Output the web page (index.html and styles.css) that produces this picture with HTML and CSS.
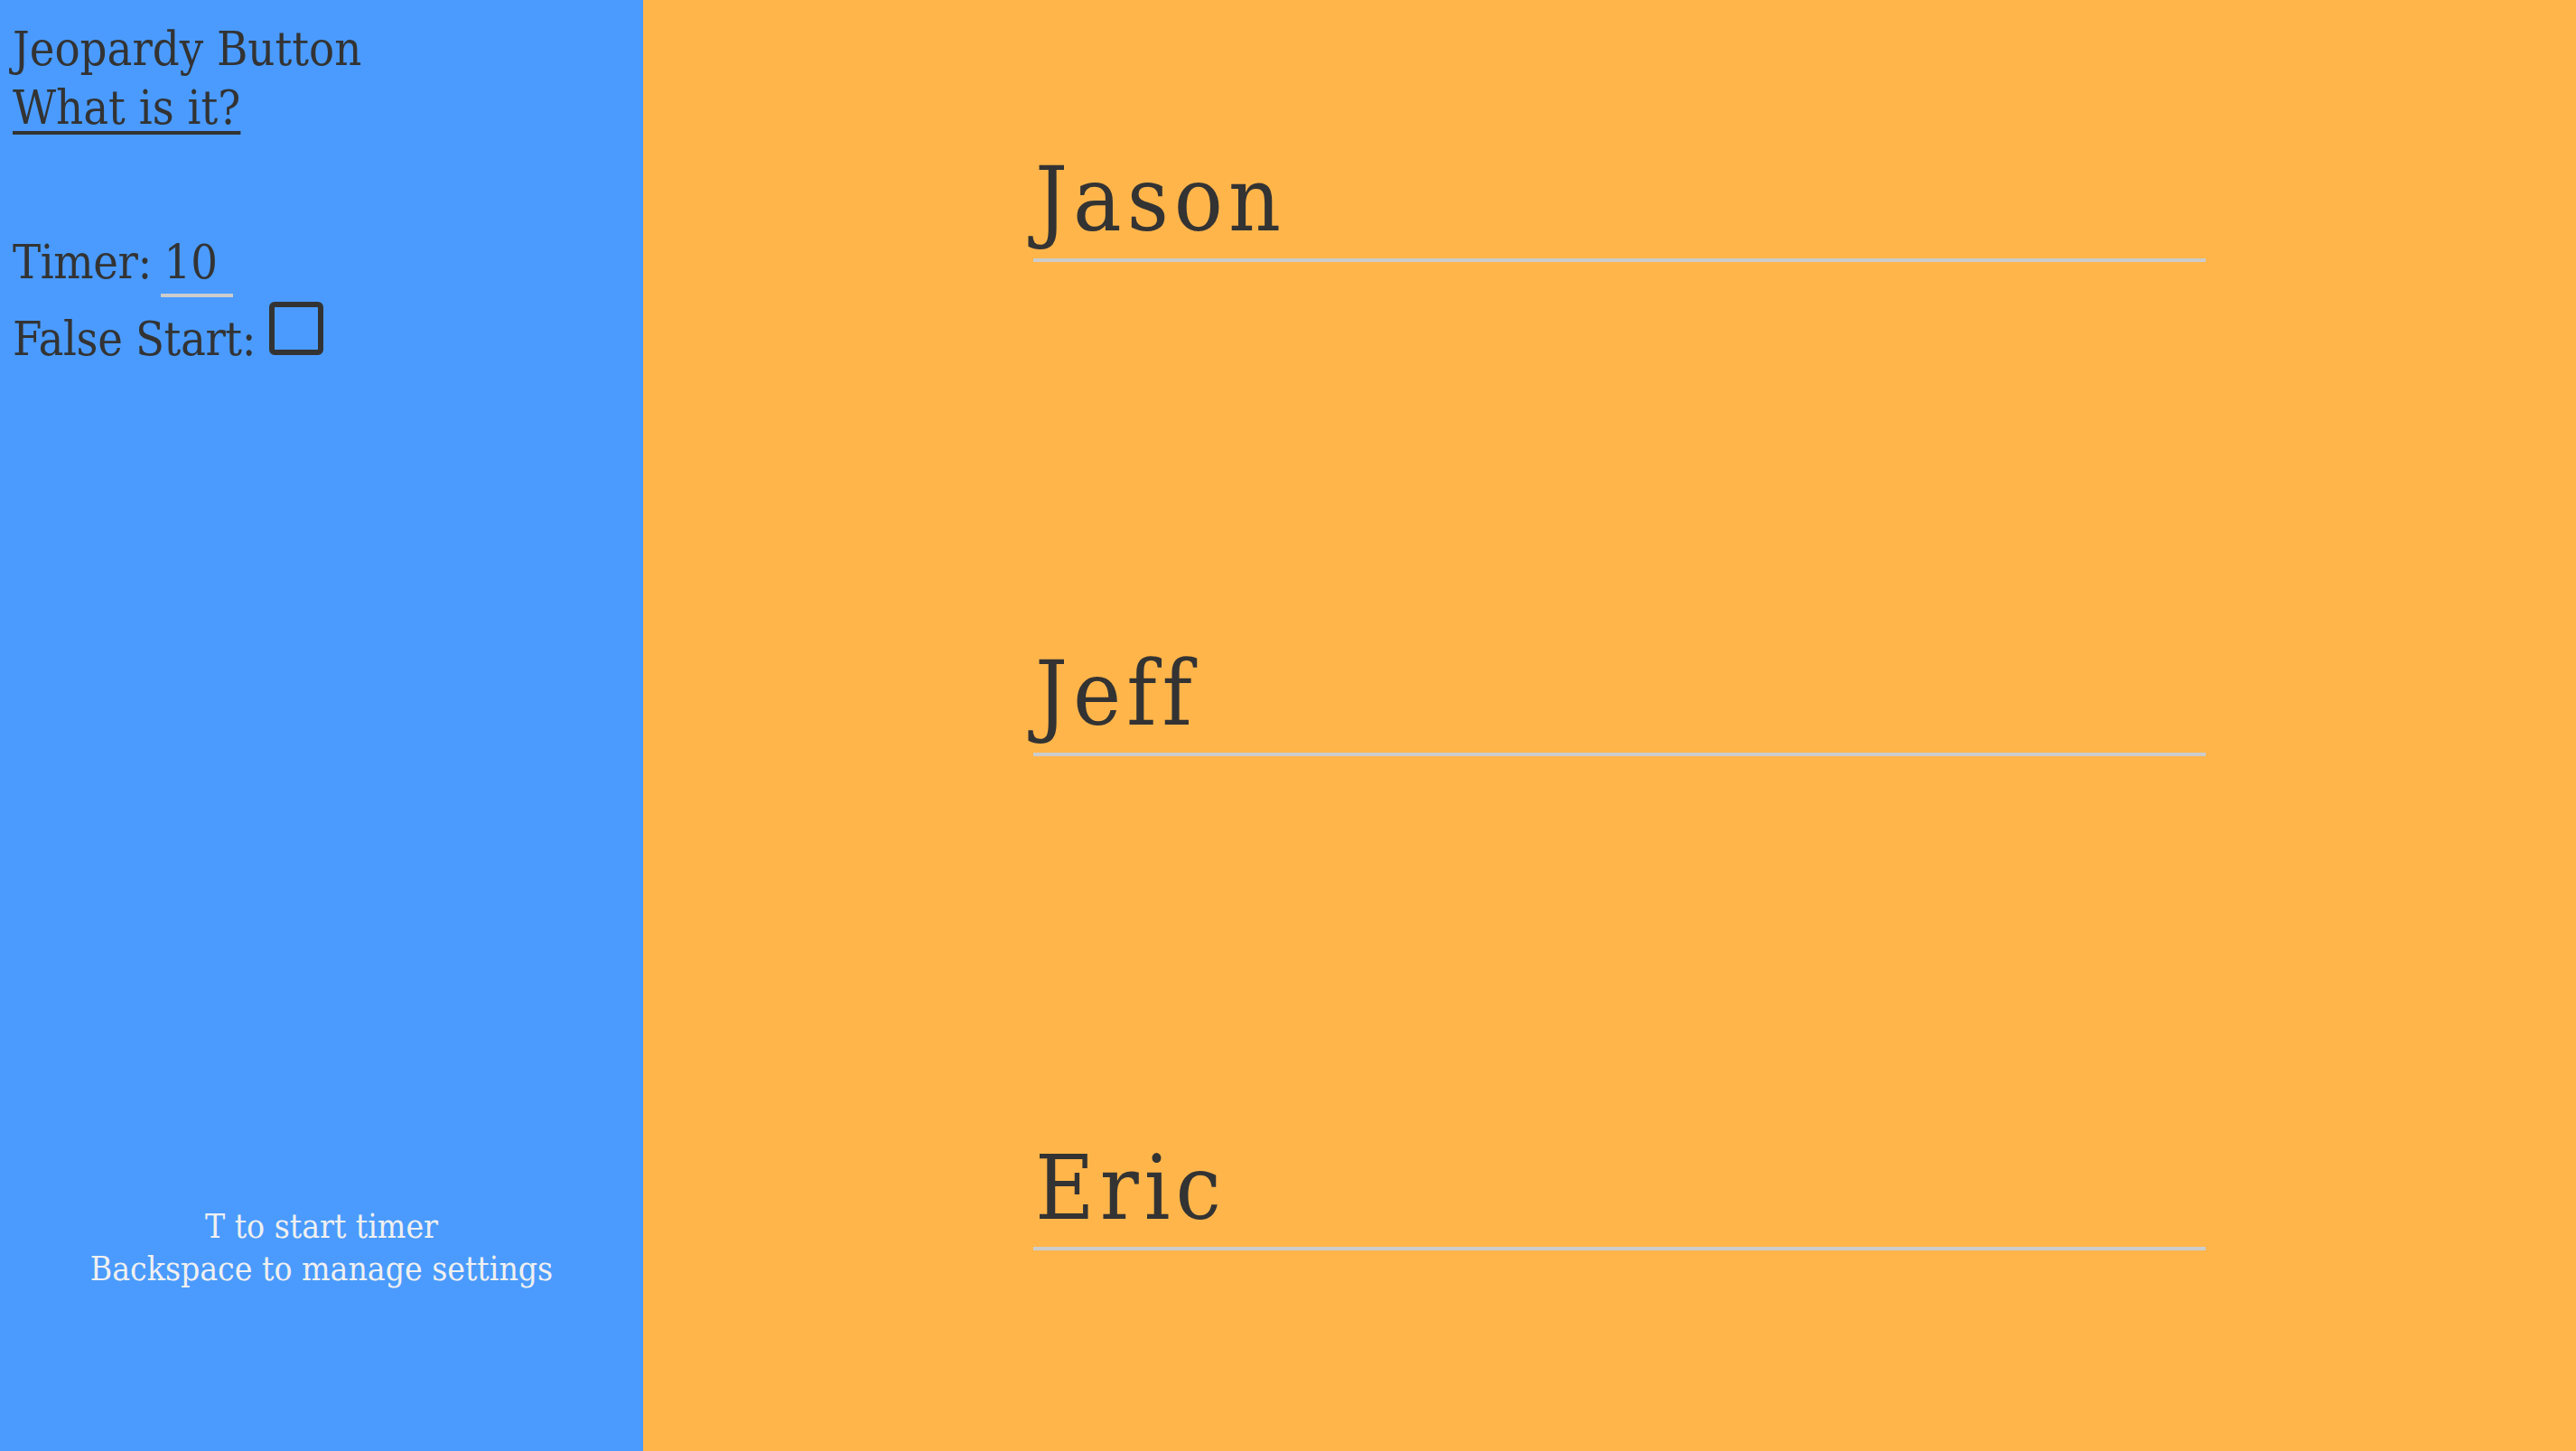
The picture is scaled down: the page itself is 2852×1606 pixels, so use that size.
FILE: index.html
```html
<!DOCTYPE html>
<html>
<head>
<meta charset="utf-8">
<link rel="stylesheet" href="styles.css">
</head>
<body>
<div class="app">
  <aside class="sidebar">
    <div class="title">Jeopardy Button</div>
    <a class="what" href="#">What is it?</a>
    <div class="settings">
      <div class="setting">Timer: <span class="timer">10</span></div>
      <div class="setting">False Start: <span class="checkbox"></span></div>
    </div>
    <div class="help">T to start timer<br>Backspace to manage settings</div>
  </aside>
  <main class="board">
    <div class="player">Jason</div>
    <div class="player">Jeff</div>
    <div class="player">Eric</div>
  </main>
</div>
</body>
</html>
```

FILE: styles.css
```css
html, body {
  margin: 0;
  padding: 0;
  height: 100%;
}
body {
  font-family: "DejaVu Serif Condensed", "DejaVu Serif", serif;
  font-stretch: condensed;
  color: #333333;
  overflow: hidden;
}
.app {
  display: flex;
  height: 1606px;
}
.sidebar {
  width: 712px;
  flex: none;
  background: #4a9bfd;
  display: flex;
  flex-direction: column;
  padding: 22px 14px 0 14px;
  box-sizing: border-box;
  font-size: 52px;
}
.title {
  line-height: 65px;
}
.what {
  line-height: 65px;
  color: #333333;
  text-decoration: underline;
  text-decoration-thickness: 4px;
  text-underline-offset: 8px;
  align-self: flex-start;
}
.settings {
  margin-top: 96px;
}
.setting {
  line-height: 85px;
  white-space: nowrap;
  letter-spacing: -0.4px;
}
.timer {
  display: inline-block;
  width: 77px;
  padding-left: 3px;
  line-height: 54px;
  padding-bottom: 8px;
  border-bottom: 4px solid #cccccc;
  margin-left: -4px;
  letter-spacing: 0;
}
.checkbox {
  display: inline-block;
  width: 60px;
  height: 59px;
  box-sizing: border-box;
  border: 6px solid #333333;
  border-radius: 6px;
}
.help {
  margin-top: auto;
  padding-bottom: 178px;
  text-align: center;
  color: #f0f0f0;
  font-size: 37px;
  line-height: 47px;
}
.board {
  flex: 1;
  background: #ffb54a;
  padding: 171px 0 0 432px;
  box-sizing: border-box;
  display: flex;
  flex-direction: column;
  gap: 428px;
}
.player {
  width: 1296px;
  font-size: 100px;
  line-height: 100px;
  letter-spacing: 6px;
  padding: 0 0 15px 2px;
  border-bottom: 4px solid #cccccc;
  box-sizing: content-box;
}
```
